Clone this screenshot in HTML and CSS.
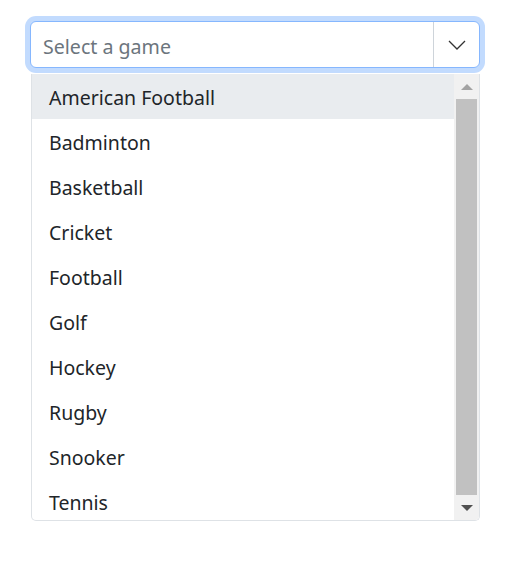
FILE: index.html
```
<!DOCTYPE html>
<html lang="en">
<head>
	<meta charset="UTF-8">
	<title>Select a game</title>
	<link rel="stylesheet" href="styles.css">
</head>
<body>
	<div class="wrap">
		<div class="combo">
			<div class="input">Select a game</div>
			<div class="toggle">
				<svg width="18" height="10" viewBox="0 0 18 10"><path d="M1 1l8 8 8-8" fill="none" stroke="#333" stroke-width="1.3"/></svg>
			</div>
		</div>
		<div class="popup">
			<ul class="list">
				<li class="active">American Football</li>
				<li>Badminton</li>
				<li>Basketball</li>
				<li>Cricket</li>
				<li>Football</li>
				<li>Golf</li>
				<li>Hockey</li>
				<li>Rugby</li>
				<li>Snooker</li>
				<li>Tennis</li>
			</ul>
			<div class="bar">
				<div class="btn"><span class="up"></span></div>
				<div class="thumb"></div>
				<div class="btn"><span class="down"></span></div>
			</div>
		</div>
	</div>
</body>
</html>
```
FILE: styles.css
```
*{margin: 0;padding: 0;box-sizing: border-box;}
body{background: #fff;font-family: "Noto Sans", "Open Sans", sans-serif;color: #212529;}
.wrap{width: 450px;margin: 21px 0 0 30px;}
.combo{display: flex;height: 47px;border: 1px solid #86b7fe;border-radius: 6px;box-shadow: 0 0 0 5px #c2dbfe;background: #fff;}
.input{flex: 1;padding: 2px 12px 0;font-size: 19.6px;line-height: 45px;color: #6c757d;}
.toggle{width: 46px;border-left: 1px solid #ced4da;display: flex;align-items: center;justify-content: center;}
.popup{display: flex;height: 447px;margin: 6px 0 0 1px;border: 1px solid #dee2e6;border-top: 0;border-radius: 0 0 5px 5px;overflow: hidden;}
.list{flex: 1;list-style: none;overflow: hidden;}
.list li{height: 45px;line-height: 47px;padding-left: 17px;font-size: 19.5px;}
.list li.active{background: #e9ecef;}
.bar{width: 25px;background: #f1f1f1;display: flex;flex-direction: column;}
.btn{height: 25px;display: flex;align-items: center;justify-content: center;}
.thumb{flex: 1;margin: 0 2px;background: #c1c1c1;}
.up{border: 6px solid transparent;border-bottom: 6px solid #a3a3a3;border-top: 0;}
.down{border: 6px solid transparent;border-top: 6px solid #505050;border-bottom: 0;}
```
